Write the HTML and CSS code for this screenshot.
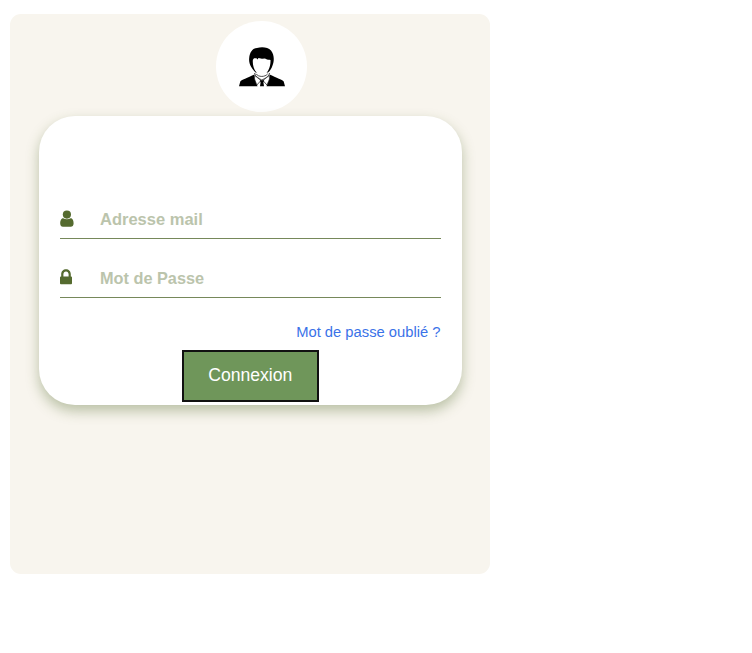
FILE: index.html
```html
<!DOCTYPE html>
<html lang="fr">
<head>
<meta charset="utf-8">
<title>Connexion</title>
<link rel="stylesheet" href="styles.css">
</head>
<body>
<main class="panel">
  <div class="avatar">
    <svg class="portrait" viewBox="0 0 46 40" aria-hidden="true">
      <path d="M16.500 25.500C12.500 21 9.500 17 10.200 11C10.700 5 14 1 18 1C23 -.5 29 .2 32 3.500C35.500 8 35.300 14 33.500 18.500C32.500 21.500 31 24 29 25.500Z"/>
      <path class="face" d="M13.900 12.800L15 11.300H17.500L18.500 12.600L19.500 11L23 11.700L26 11.600C28 12.800 30 13 31.500 13C31.900 19 29 28 22.800 28.300C17 28 13 20 13.900 12.800Z"/>
      <path class="outline" d="M15.500 26C16 29.500 20 31.500 22.800 33C26 31.500 30 29.500 30.500 26M17 26.800C19.500 30.300 26 30.300 28.700 26.800"/>
      <path d="M0 39.300L1.300 34.500C1.600 33.200 9 30.500 15.500 27.500V31L18.500 39.300Z"/>
      <path d="M46 39.300L44.700 34.500C44.400 33.200 37 30.500 30.500 27.500V31L27.500 39.300Z"/>
      <path class="shirt" d="M15.800 28.500L22 33.500L17.800 38L15.500 32ZM30.200 28.500L23.900 33.500L28 38L30.500 32Z"/>
      <path d="M20.800 33.300H25.200L24.400 35.500L25 39.300H21L21.600 35.500Z"/>
    </svg>
  </div>
  <form class="card">
    <div class="field">
      <svg class="icon" viewBox="0 0 14 18" aria-hidden="true"><path d="M3.200 8.200C1 8.200 .2 10.800 .2 13.500C.2 15.500 1.300 16.800 3 16.800H10.700C12.400 16.800 13.600 15.500 13.600 13.500C13.600 10.800 12.800 8.200 10.600 8.200C8.500 9.700 5.300 9.700 3.200 8.200Z"/><circle cx="6.900" cy="4.600" r="4.100"/></svg>
      <span class="label">Adresse mail</span>
    </div>
    <div class="field">
      <svg class="icon" viewBox="0 0 14 18" aria-hidden="true"><path d="M.9 7.600H1.200V5.300C1.200 2.300 3.300 .3 6 .3S10.800 2.300 10.800 5.300V7.600H11.100Q12 7.600 12 8.500V14.300Q12 15.200 11.100 15.200H.9Q0 15.200 0 14.300V8.500Q0 7.600 .9 7.600ZM3.400 7.600H8.600V5.300C8.600 3.600 7.500 2.400 6 2.400S3.400 3.600 3.400 5.300Z"/></svg>
      <span class="label label-password">Mot de Passe</span>
    </div>
    <a class="forgot">Mot de passe oublié ?</a>
    <button class="submit" type="button">Connexion</button>
  </form>
</main>
</body>
</html>
```
FILE: styles.css
```css
* { box-sizing: border-box; }

body {
  margin: 0;
  padding: 14px 0 0 10px;
  background: #fff;
  font-family: "Liberation Sans", Arial, sans-serif;
}

.panel {
  display: flex;
  flex-direction: column;
  align-items: flex-start;
  width: 480px;
  height: 560px;
  padding: 7px 28px 0 29px;
  background: #f8f5ee;
  border-radius: 11px;
}

.avatar {
  display: flex;
  justify-content: center;
  width: 91px;
  height: 91px;
  margin-left: 177px;
  padding-top: 26px;
  background: #fff;
  border-radius: 50%;
}

.portrait {
  width: 46px;
  height: 40px;
}

.face { fill: #fff; }
.outline { fill: none; stroke: #222; stroke-width: .8; }
.shirt { fill: #fff; stroke: #111; stroke-width: .7; }

.card {
  display: flex;
  flex-direction: column;
  width: 423px;
  height: 289px;
  margin-top: 4px;
  padding: 84px 21.5px 0 21px;
  background: #fff;
  border-radius: 36px;
  box-shadow: 0 6px 13px rgba(85, 107, 47, .38);
}

.field {
  display: flex;
  align-items: center;
  height: 39px;
  margin-bottom: 20px;
  border-bottom: 1px solid #76885a;
}

.icon {
  width: 14px;
  height: 18px;
  margin-right: 26px;
  fill: #556b2f;
}

.label {
  padding-top: 1px;
  color: #bbc4ac;
  font-size: 16.5px;
  font-weight: 700;
}

.label-password { font-size: 16.3px; }

.forgot {
  align-self: flex-end;
  margin-top: 6px;
  color: #3a72e8;
  font-size: 14.75px;
  line-height: 17px;
}

.submit {
  align-self: center;
  width: 137px;
  height: 51.5px;
  margin-top: 9px;
  padding: 0;
  border: 2px solid #111;
  border-radius: 0;
  background: #6f965a;
  color: #fff;
  font: 17.6px "Liberation Sans", Arial, sans-serif;
}
```
